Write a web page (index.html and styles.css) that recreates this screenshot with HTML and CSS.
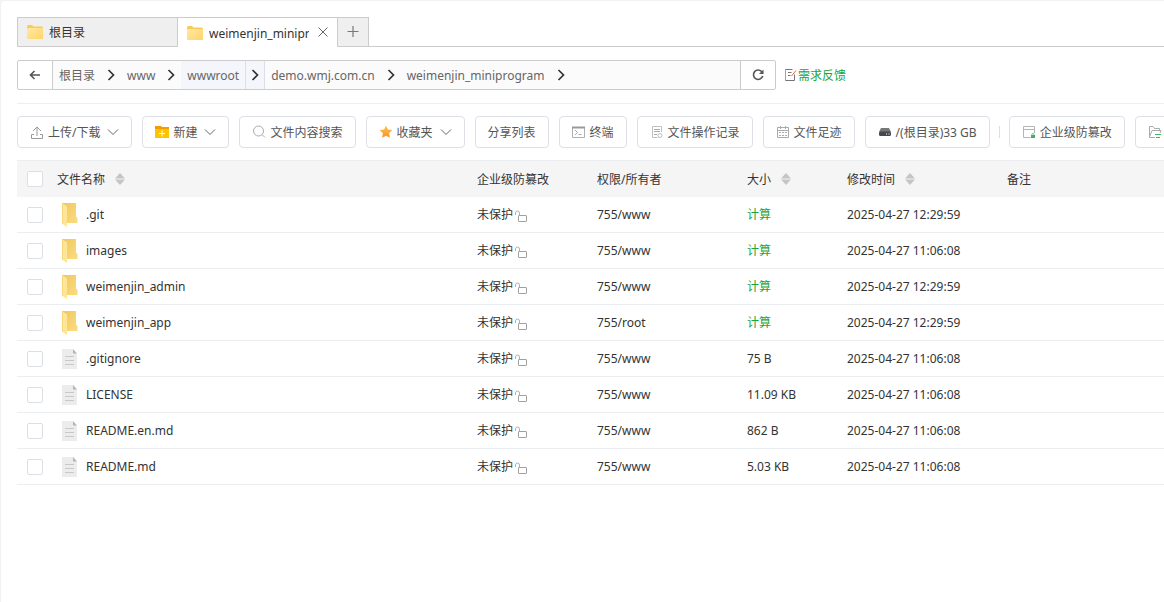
FILE: index.html
```
<!DOCTYPE html>
<html lang="zh-CN">
<head>
  <meta charset="UTF-8">
  <meta name="viewport" content="width=device-width, initial-scale=1.0">
  <title>文件管理</title>
  <link rel="stylesheet" href="styles.css">
</head>
<body>
  <svg class="sprite" aria-hidden="true">
    <defs>
      <linearGradient id="tabFill" x1="0" y1="0" x2="1" y2="1">
        <stop offset="0" stop-color="#ffe9a6" />
        <stop offset="1" stop-color="#ffd466" />
      </linearGradient>
      <linearGradient id="backFill" x1="0" y1="0" x2="1" y2="1">
        <stop offset="0" stop-color="#f0c75e" />
        <stop offset="1" stop-color="#fadc80" />
      </linearGradient>
      <linearGradient id="starFill" x1="0" y1="0" x2="0" y2="1">
        <stop offset="0" stop-color="#fcc35a" />
        <stop offset="1" stop-color="#f7931e" />
      </linearGradient>
    </defs>
    <symbol id="i-tab-folder" viewBox="0 0 16 14">
      <path d="M0 1.500Q0 0 1.500 0H5l1.500 1.500H14.500Q16 1.500 16 3v4H0z" fill="#fbc955" />
      <rect y="3" width="16" height="11" rx="1.200" fill="url(#tabFill)" />
    </symbol>
    <symbol id="i-folder" viewBox="0 0 18 24">
      <path d="M1 0H15V13.500L16.500 15V20H5z" fill="url(#backFill)" />
      <path d="M1 0L6 3.500V24L1 20.500z" fill="#ffe596" />
      <path d="M1 0H2V21L1 20.500z" fill="#f7d778" />
    </symbol>
    <symbol id="i-file" viewBox="0 0 16 20">
      <path d="M0 0H11L15 4.500V20H0z" fill="#ececec" />
      <path d="M11 0L15 4.500H11z" fill="#b5b5b5" />
      <path d="M3 7.500H12M3 11.500H12M3 15.500H12" stroke="#c8c8c8" />
    </symbol>
    <symbol id="i-unlock" viewBox="0 0 14 12">
      <path d="M1.500 5V3Q1.500 1 3.500 1T5.500 3V5.500" fill="none" stroke="#b0b0b0" />
      <rect x="4.500" y="5.500" width="8" height="6" rx="0.500" fill="none" stroke="#a0a0a0" />
    </symbol>
    <symbol id="i-down" viewBox="0 0 12 12">
      <path d="M1 3.500L6 8.500L11 3.500" fill="none" stroke="#666" />
    </symbol>
    <symbol id="i-sep" viewBox="0 0 8 12">
      <path d="M1.500 1L6.500 6L1.500 11" fill="none" stroke="#333" stroke-width="1.700" />
    </symbol>
    <symbol id="i-sort" viewBox="0 0 10 12">
      <path d="M5 0L10 5.500H0zM5 12L10 6.500H0z" fill="#c5c5c5" />
    </symbol>
  </svg>

  <div class="panel">
    <div class="tabs">
      <button class="tab" type="button">
        <svg class="tab-icon"><use href="#i-tab-folder" /></svg>
        <span class="tab-name">根目录</span>
      </button>
      <div class="tab active">
        <svg class="tab-icon"><use href="#i-tab-folder" /></svg>
        <span class="tab-name">weimenjin_miniprogram</span>
        <button class="tab-close" type="button" aria-label="关闭">
          <svg viewBox="0 0 10 10"><path d="M0.500 0.500L9.500 9.500M9.500 0.500L0.500 9.500" stroke="#666" /></svg>
        </button>
      </div>
      <button class="tab-add" type="button" aria-label="新增标签">
        <svg viewBox="0 0 12 12"><path d="M6 0V11M0.500 5.500H11.500" stroke="#777" stroke-width="1.200" /></svg>
      </button>
    </div>

    <div class="path-row">
      <nav class="path">
        <button class="path-back" type="button" aria-label="返回">
          <svg viewBox="0 0 12 10"><path d="M11 5H2M5.500 1L1.500 5L5.500 9" fill="none" stroke="#555" stroke-width="1.600" /></svg>
        </button>
        <div class="crumbs">
          <a class="crumb" href="#">根目录</a>
          <span class="crumb-sep"><svg><use href="#i-sep" /></svg></span>
          <a class="crumb" href="#">www</a>
          <span class="crumb-sep"><svg><use href="#i-sep" /></svg></span>
          <a class="crumb hover" href="#">wwwroot</a>
          <span class="crumb-sep hover"><svg><use href="#i-sep" /></svg></span>
          <a class="crumb" href="#">demo.wmj.com.cn</a>
          <span class="crumb-sep"><svg><use href="#i-sep" /></svg></span>
          <a class="crumb" href="#">weimenjin_miniprogram</a>
          <span class="crumb-sep"><svg><use href="#i-sep" /></svg></span>
        </div>
        <button class="path-refresh" type="button" aria-label="刷新">
          <svg viewBox="0 0 12 12"><path d="M10 3A4.700 4.700 0 1 0 10.700 7" fill="none" stroke="#555" stroke-width="1.600" /><path d="M11.500 0.500V5H7z" fill="#555" /></svg>
        </button>
      </nav>
      <a class="feedback" href="#">
        <svg viewBox="0 0 12 12"><path d="M7.500 0.500H0.500M0.500 11.500H9.500V5.500" fill="none" stroke="#777" /><path d="M0.500 12V0" stroke="#d98a78" /><path d="M3 3.500H6.500M3 6.500H5.500" stroke="#777" /><path d="M6.500 7L11 1.500" stroke="#e0654f" /></svg>
        <span>需求反馈</span>
      </a>
    </div>

    <div class="toolbar">
      <button class="btn" type="button">
        <svg class="icon" viewBox="0 0 14 14"><path d="M3 6L7 2L11 6M7 2.500V11M4 9.500H1.500V13.500H12.500V9.500H10" fill="none" stroke="#999" /></svg>
        <span>上传/下载</span>
        <svg class="down"><use href="#i-down" /></svg>
      </button>
      <button class="btn" type="button">
        <svg class="icon" viewBox="0 0 14 14"><path d="M0 1H6L7 2H14V4H0z" fill="#f59a00" /><path d="M0 4H14V13H0z" fill="#ffc400" /><path d="M7 5.500V11.500M4 8.500H10" stroke="#fff" /></svg>
        <span>新建</span>
        <svg class="down"><use href="#i-down" /></svg>
      </button>
      <button class="btn" type="button">
        <svg class="icon" viewBox="0 0 14 14"><circle cx="6.500" cy="6" r="5" fill="none" stroke="#aaa" /><path d="M10 9.500L13 12.500" stroke="#aaa" /></svg>
        <span>文件内容搜索</span>
      </button>
      <button class="btn" type="button">
        <svg class="icon" viewBox="0 0 14 14"><path d="M7 0.500L8.900 4.500L13.300 5.100L10.100 8.200L10.900 12.800L7 10.700L3.100 12.800L3.900 8.200L0.700 5.100L5.100 4.500z" fill="url(#starFill)" /></svg>
        <span>收藏夹</span>
        <svg class="down"><use href="#i-down" /></svg>
      </button>
      <button class="btn" type="button"><span>分享列表</span></button>
      <button class="btn" type="button">
        <svg class="icon" viewBox="0 0 14 14"><path d="M0.500 2V12.500H12.500V2" fill="none" stroke="#b0b0b0" /><path d="M0 2.500H13" stroke="#999" stroke-width="2" /><path d="M3 5L5.500 7.500L3 10M6.500 9.500H9.500" fill="none" stroke="#aaa" /></svg>
        <span>终端</span>
      </button>
      <button class="btn" type="button">
        <svg class="icon" viewBox="0 0 14 14"><path d="M11.500 7V1.500H2.500V12.500H7.500" fill="none" stroke="#c0c0c0" /><path d="M4 4.500H10M4 6.500H10M4 9.500H7" stroke="#aaa" /><circle cx="10" cy="10.500" r="2" fill="none" stroke="#bbb" /></svg>
        <span>文件操作记录</span>
      </button>
      <button class="btn" type="button">
        <svg class="icon" viewBox="0 0 14 14"><path d="M1.500 2.500H12.500V12.500H1.500zM1 5.500H13M4.500 1V4M9.500 1V4" fill="none" stroke="#aaa" /><path d="M3 7.500H11M3 10.500H11" stroke="#aaa" stroke-dasharray="2 1" /></svg>
        <span>文件足迹</span>
      </button>
      <button class="btn" type="button">
        <svg class="icon" viewBox="0 0 14 14"><path d="M3 3H11L13 7H1z" fill="#777" /><rect x="1" y="6.500" width="12" height="4.500" rx="1.500" fill="#444950" /><path d="M8 9H9M10.500 9H11.500" stroke="#fff" /></svg>
        <span>/(根目录)33 GB</span>
      </button>
      <span class="divider"></span>
      <button class="btn" type="button">
        <svg class="icon" viewBox="0 0 14 14"><path d="M8.500 12.500H1.500V1.500H12.500V8M1 4.500H12" fill="none" stroke="#b5b5b5" /><path d="M9 10H13V13H9z" fill="#41b35d" /><path d="M10 10V8.500H12V10" fill="none" stroke="#8ccf9b" /></svg>
        <span>企业级防篡改</span>
      </button>
      <button class="btn" type="button" aria-label="文件同步">
        <svg class="icon" viewBox="0 0 14 14"><path d="M7 12.500H1.500V1.500H5L6.500 3.500H11.500V5.500M1.500 12L4 5.500H13L12 8" fill="none" stroke="#aaa" /><path d="M7 9.500H13M8 12.500H12" stroke="#41b35d" /></svg>
      </button>
    </div>

    <table class="files">
      <colgroup>
        <col class="c-check">
        <col class="c-name">
        <col class="c-lock">
        <col class="c-owner">
        <col class="c-size">
        <col class="c-time">
        <col>
      </colgroup>
      <thead>
        <tr>
          <th><input type="checkbox" aria-label="全选"></th>
          <th>文件名称<svg class="sort"><use href="#i-sort" /></svg></th>
          <th>企业级防篡改</th>
          <th>权限/所有者</th>
          <th>大小<svg class="sort"><use href="#i-sort" /></svg></th>
          <th>修改时间<svg class="sort"><use href="#i-sort" /></svg></th>
          <th>备注</th>
        </tr>
      </thead>
      <tbody>
        <tr>
          <td><input type="checkbox" aria-label=".git"></td>
          <td><div class="name"><svg class="folder"><use href="#i-folder" /></svg>.git</div></td>
          <td>未保护<svg class="unlock"><use href="#i-unlock" /></svg></td>
          <td>755/www</td>
          <td><a href="#">计算</a></td>
          <td>2025-04-27 12:29:59</td>
          <td></td>
        </tr>
        <tr>
          <td><input type="checkbox" aria-label="images"></td>
          <td><div class="name"><svg class="folder"><use href="#i-folder" /></svg>images</div></td>
          <td>未保护<svg class="unlock"><use href="#i-unlock" /></svg></td>
          <td>755/www</td>
          <td><a href="#">计算</a></td>
          <td>2025-04-27 11:06:08</td>
          <td></td>
        </tr>
        <tr>
          <td><input type="checkbox" aria-label="weimenjin_admin"></td>
          <td><div class="name"><svg class="folder"><use href="#i-folder" /></svg>weimenjin_admin</div></td>
          <td>未保护<svg class="unlock"><use href="#i-unlock" /></svg></td>
          <td>755/www</td>
          <td><a href="#">计算</a></td>
          <td>2025-04-27 12:29:59</td>
          <td></td>
        </tr>
        <tr>
          <td><input type="checkbox" aria-label="weimenjin_app"></td>
          <td><div class="name"><svg class="folder"><use href="#i-folder" /></svg>weimenjin_app</div></td>
          <td>未保护<svg class="unlock"><use href="#i-unlock" /></svg></td>
          <td>755/root</td>
          <td><a href="#">计算</a></td>
          <td>2025-04-27 12:29:59</td>
          <td></td>
        </tr>
        <tr>
          <td><input type="checkbox" aria-label=".gitignore"></td>
          <td><div class="name"><svg class="file"><use href="#i-file" /></svg>.gitignore</div></td>
          <td>未保护<svg class="unlock"><use href="#i-unlock" /></svg></td>
          <td>755/www</td>
          <td>75 B</td>
          <td>2025-04-27 11:06:08</td>
          <td></td>
        </tr>
        <tr>
          <td><input type="checkbox" aria-label="LICENSE"></td>
          <td><div class="name"><svg class="file"><use href="#i-file" /></svg>LICENSE</div></td>
          <td>未保护<svg class="unlock"><use href="#i-unlock" /></svg></td>
          <td>755/www</td>
          <td>11.09 KB</td>
          <td>2025-04-27 11:06:08</td>
          <td></td>
        </tr>
        <tr>
          <td><input type="checkbox" aria-label="README.en.md"></td>
          <td><div class="name"><svg class="file"><use href="#i-file" /></svg>README.en.md</div></td>
          <td>未保护<svg class="unlock"><use href="#i-unlock" /></svg></td>
          <td>755/www</td>
          <td>862 B</td>
          <td>2025-04-27 11:06:08</td>
          <td></td>
        </tr>
        <tr>
          <td><input type="checkbox" aria-label="README.md"></td>
          <td><div class="name"><svg class="file"><use href="#i-file" /></svg>README.md</div></td>
          <td>未保护<svg class="unlock"><use href="#i-unlock" /></svg></td>
          <td>755/www</td>
          <td>5.03 KB</td>
          <td>2025-04-27 11:06:08</td>
          <td></td>
        </tr>
      </tbody>
    </table>
  </div>
</body>
</html>
```
FILE: styles.css
```
* {
  box-sizing: border-box;
}

body {
  margin: 0;
  background-color: #f2f2f2;
  color: #333;
  font-family: "Noto Sans", "Noto Sans CJK SC", sans-serif;
  font-size: 12px;
  line-height: 18px;
}

button {
  padding: 0;
  border: none;
  background: none;
  color: inherit;
  font: inherit;
  cursor: pointer;
}

a {
  color: #20a53a;
  text-decoration: none;
}

svg {
  display: block;
  flex: none;
}

.sprite {
  position: absolute;
  width: 0;
  height: 0;
}

.panel {
  min-height: calc(100vh - 1px);
  margin: 1px 0 0 1px;
  padding: 16px 0 0 16px;
  border-top-left-radius: 4px;
  background-color: #fff;
  overflow: hidden;
}

/* tabs */
.tabs {
  display: flex;
  height: 30px;
}

.tabs::after {
  content: "";
  flex: 1;
  border-bottom: 1px solid #ccc;
}

.tab {
  display: flex;
  align-items: center;
  width: 161px;
  padding: 0 9px;
  border: 1px solid #ccc;
  background-color: #efefef;
}

.tab.active {
  width: 159px;
  border-width: 1px 0 0;
  background-color: #fff;
}

.tab-icon {
  width: 16px;
  height: 14px;
  margin-right: 6px;
}

.tab-name {
  padding-top: 2px;
  overflow: hidden;
  white-space: nowrap;
}

.tab-close {
  flex: none;
  margin-left: 9px;
  padding-bottom: 2px;
}

.tab-close svg {
  width: 10px;
  height: 10px;
}

.tab-add {
  width: 32px;
  border: 1px solid #ccc;
  background-color: #efefef;
}

.tab-add svg {
  width: 12px;
  height: 12px;
  margin: 0 auto;
}

/* path bar */
.path-row {
  display: flex;
  align-items: center;
  padding: 13px 0;
  border-bottom: 1px solid #eee;
}

.path {
  display: flex;
  flex: 0 1 759px;
  height: 30px;
  border: 1px solid #ccc;
  border-radius: 2px;
}

.path-back,
.path-refresh {
  display: flex;
  flex: none;
  align-items: center;
  justify-content: center;
  width: 34px;
}

.path-back svg {
  width: 12px;
  height: 10px;
}

.path-refresh svg {
  width: 12px;
  height: 12px;
}

.crumbs {
  display: flex;
  flex: 1;
  border: solid #ccc;
  border-width: 0 1px;
  background-color: #fbfbfb;
}

.crumb {
  padding: 1px 6px 0;
  color: #666;
  line-height: 27px;
}

.crumb-sep {
  display: flex;
  align-items: center;
  justify-content: center;
  width: 20px;
}

.crumb-sep svg {
  width: 8px;
  height: 12px;
}

.hover {
  background-color: #f4f6fb;
}

.crumb-sep.hover {
  border: solid #dcdfe6;
  border-width: 0 1px;
}

.feedback {
  display: flex;
  align-items: center;
  margin-left: 9px;
}

.feedback span {
  padding: 2px 0 0 1px;
}

.feedback svg {
  width: 12px;
  height: 12px;
}

/* toolbar */
.toolbar {
  display: flex;
  gap: 10px;
  padding: 12px 0;
}

.btn {
  display: flex;
  flex: none;
  align-items: center;
  height: 32px;
  padding: 0 12px;
  border: 1px solid #dcdfe6;
  border-radius: 4px;
  background-color: #fff;
  color: #555;
  white-space: nowrap;
}

.btn span {
  padding-top: 2px;
}

.btn .icon {
  width: 14px;
  height: 14px;
  margin-right: 4px;
}

.btn .down {
  width: 12px;
  height: 12px;
  margin-left: 7px;
}

.divider {
  flex: none;
  align-self: center;
  width: 1px;
  height: 12px;
  margin: 0 -1px;
  background-color: #dcdfe6;
}

/* file list */
.files {
  width: 100%;
  border-spacing: 0;
  table-layout: fixed;
}

.c-check {
  width: 36px;
}

.c-name {
  width: 420px;
}

.c-lock {
  width: 120px;
}

.c-owner {
  width: 150px;
}

.c-size {
  width: 100px;
}

.c-time {
  width: 160px;
}

.files th,
.files td {
  height: 36px;
  padding: 0 4px;
  border-bottom: 1px solid #ebeef0;
  font-weight: normal;
  text-align: left;
  white-space: nowrap;
}

.files th {
  height: 37px;
  padding-top: 1px;
  border-top: 1px solid #ebeef0;
  border-bottom: none;
  background-color: #f5f5f5;
}

.files th:first-child,
.files td:first-child {
  padding: 0 10px;
}

.files input {
  display: block;
  width: 16px;
  height: 16px;
  margin: 0;
  border: 1px solid #dcdfe6;
  border-radius: 2px;
  background-color: #fff;
  appearance: none;
}

.name {
  display: flex;
  align-items: center;
}

.folder {
  width: 18px;
  height: 24px;
  margin: 0 7px 0 4px;
}

.file {
  width: 16px;
  height: 20px;
  margin: 0 8px 0 5px;
}

.sort {
  display: inline-block;
  width: 10px;
  height: 12px;
  margin-left: 10px;
  vertical-align: -1px;
}

.unlock {
  display: inline-block;
  width: 14px;
  height: 12px;
  margin-left: 1px;
  vertical-align: -3px;
}
```
